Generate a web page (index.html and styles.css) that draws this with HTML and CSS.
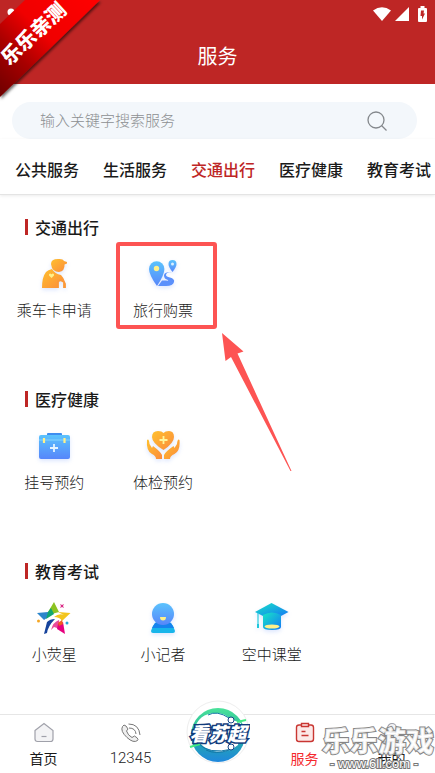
FILE: index.html
```html
<!DOCTYPE html>
<html lang="zh-CN">
<head>
  <meta charset="UTF-8">
  <meta name="viewport" content="width=device-width, initial-scale=1">
  <title>服务</title>
  <link rel="stylesheet" href="styles.css">
</head>
<body>

<div class="page">

  <header class="header">
    <div class="status">
      <svg width="18" height="14" viewBox="0 0 18 14"><path d="M0 3.5Q9-3 18 3.5L9 14Z" fill="#fff"/></svg>
      <svg width="14" height="14" viewBox="0 0 14 14"><path d="M14 0V14H0Z" fill="#fff"/></svg>
      <svg class="battery" width="9" height="16" viewBox="0 0 9 16"><path d="M2.5 0H6.5V2H8Q9 2 9 3V15Q9 16 8 16H1Q0 16 0 15V3Q0 2 1 2H2.5Z" fill="#fff"/><path d="M3 4.500H6L5.500 7.500H7L4 13.500V10H2.500Z" fill="#be2625"/></svg>
    </div>
    <h1>服务</h1>
  </header>

  <!-- corner ribbon -->
  <svg class="ribbon" width="104" height="104" viewBox="0 0 104 104">
    <defs>
      <linearGradient id="rib" x1="0" y1="1" x2="1" y2="0">
        <stop offset="0" stop-color="#6d0000"/>
        <stop offset=".3" stop-color="#a80000"/>
        <stop offset=".55" stop-color="#f00505"/>
        <stop offset="1" stop-color="#f00"/>
      </linearGradient>
      <filter id="ribShadow" x="-10%" y="-10%" width="130%" height="130%"><feDropShadow dx="1" dy="2" stdDeviation="1.500" flood-opacity=".6"/></filter>
    </defs>
    <circle cx="11" cy="12" r="3.500" fill="#fff"/>
    <path d="M25 0H100L0 97V24Z" fill="url(#rib)" filter="url(#ribShadow)"/>
    <text class="ribbon-text" x="33" y="41" text-anchor="middle" transform="rotate(-43 33 33)">乐乐亲测</text>
  </svg>

  <form class="search">
    <input type="search" placeholder="输入关键字搜索服务" aria-label="搜索服务">
    <button type="button" aria-label="搜索">
      <svg width="20" height="20" viewBox="0 0 20 20" fill="none" stroke="#84888c" stroke-width="1.300"><circle cx="9" cy="9" r="8"/><path d="M14.500 14.500L19.500 19.500"/></svg>
    </button>
  </form>

  <nav class="tabs">
    <a href="#">公共服务</a>
    <a href="#">生活服务</a>
    <a href="#traffic" class="active">交通出行</a>
    <a href="#health">医疗健康</a>
    <a href="#edu">教育考试</a>
  </nav>

  <main class="content">
    <section id="traffic">
      <h2>交通出行</h2>
      <div class="grid">
        <a href="#" class="item">
          <svg class="icon" viewBox="0 0 40 40">
            <defs><linearGradient id="orange" x1="0" y1="0" x2="1" y2="1"><stop offset="0" stop-color="#ffc02e"/><stop offset="1" stop-color="#fb8b3c"/></linearGradient></defs>
            <g fill="url(#orange)">
              <path d="M17 10Q17 5 24 5Q29 4.500 30 7L33 8V9.500L30.500 10.500Q31 17 25 18Q18 18 17 10Z"/>
              <path d="M18 15Q21 20 27 21Q30 24 31 28Q28 25 24 27V34H8Q8 23 12 18Q14 16 18 15Z"/>
            </g>
            <path d="M24 34V28Q26 24.500 30 28V34M30 28L31 30V34" fill="none" stroke="#fb9838" stroke-width="1.800"/>
            <path d="M17.500 24L15 21.500Q14.500 19.500 16.200 19.500L17.500 20.200L18.800 19.500Q20.500 19.500 20 21.500Z" fill="#fff08a"/>
          </svg>
          <span>乘车卡申请</span>
        </a>
        <a href="#" class="item marked">
          <svg class="icon" viewBox="0 0 40 40">
            <defs><linearGradient id="blue" x1="0" y1="0" x2="0" y2="1"><stop offset="0" stop-color="#5bc3fd"/><stop offset="1" stop-color="#5786fa"/></linearGradient></defs>
            <path d="M14 32Q6 21 6 15A7.700 7.700 0 0 1 21.400 15Q21.400 21 14 32Z" fill="url(#blue)"/>
            <circle cx="13.500" cy="14.500" r="2.700" fill="#fff08a"/>
            <path d="M29.500 18Q25.500 13 25.500 10A4 4 0 0 1 33.500 10Q33.500 13 29.500 18Z" fill="url(#blue)"/>
            <circle cx="29.500" cy="10" r="1.500" fill="#d9f0ff"/>
            <path d="M29 18Q23 18 23 21Q23 22.500 27 23.500Q32 25 31 28Q30 32 23 32H15L19 26.500H23Q26 27 25 26Q21 25 21 21.500Q21 17.500 29 18Z" fill="#5b90fb"/>
          </svg>
          <span>旅行购票</span>
          <svg class="mark" width="180" height="232" viewBox="0 0 180 232">
            <rect x="2" y="2" width="97" height="83" rx="1" fill="none" stroke="#fd5453" stroke-width="4"/>
            <path d="M106 91L127.500 109.500L121.500 111.500L175.500 229L174.500 229L115 115L109.500 119Z" fill="#fd5453"/>
          </svg>
        </a>
      </div>
    </section>

    <section id="health">
      <h2>医疗健康</h2>
      <div class="grid">
        <a href="#" class="item">
          <svg class="icon" viewBox="0 0 40 40">
            <rect x="13" y="7" width="15" height="5" rx="1" fill="#3e8df0"/>
            <rect x="5" y="9" width="31" height="24" rx="2" fill="url(#blue)"/>
            <path d="M5 14H36" stroke="#86d5ff" stroke-width="1"/>
            <path d="M10 12V17M30.500 12V17" stroke="#fff08a" stroke-width="2.200"/>
            <path d="M20 18V26M16 22H24" stroke="#e4f4ff" stroke-width="1.800"/>
          </svg>
          <span>挂号预约</span>
        </a>
        <a href="#" class="item">
          <svg class="icon" viewBox="0 0 40 40">
            <g fill="url(#orange)">
              <path d="M20.500 24Q9 17 9 11Q9 5 15 5Q19 5 20.500 7Q22 5 26 5Q31 5 31 11Q31 17 20.500 24Z"/>
              <path d="M4 14Q6 12 6.500 18L9 22L10 20Q18 26 19 29V33H13Q13 30 9 28Q3 25 4 14Z"/>
              <path d="M36.500 14Q34.500 12 34 18L31.500 22L30.500 20Q22 26 21 29V33H27Q27 30 31.500 28Q37.500 25 36.500 14Z"/>
            </g>
            <path d="M20.500 10V18M16.500 14H24.500" stroke="#fff59a" stroke-width="1.800"/>
          </svg>
          <span>体检预约</span>
        </a>
      </div>
    </section>

    <section id="edu">
      <h2>教育考试</h2>
      <div class="grid">
        <a href="#" class="item">
          <svg class="icon no-glow" viewBox="0 0 40 40">
            <path d="M20 4L25 14Q19 15 15 18L14 14Z" fill="#8cc321"/>
            <path d="M3 15L14 14L17 17L10 22Z" fill="#2c86cb"/>
            <path d="M14 14L17 10L20 16L12 21Z" fill="#11a66f"/>
            <path d="M24 14L36.500 15L28 23Q26 19 20 19Q25 15 30 17Z" fill="#f3c51c"/>
            <path d="M10 36L13 24Q16 21 21 21Q14 28 13 35Z" fill="#16439c"/>
            <path d="M17 32Q19 24 25 22L26 31L20 29Z" fill="#e94c9b"/>
            <path d="M24 26L29 24L31 36L23 31Z" fill="#e6007e"/>
            <path d="M24 25L28 22L29 26L25 28Z" fill="#f05c22"/>
            <path d="M26 6L28 7L30 6L29 8L30 10L28 9L26 10L27 8Z" fill="#d92985"/>
            <circle cx="4.500" cy="23" r="1.500" fill="#f5a623"/>
            <circle cx="33" cy="25" r="1.500" fill="#29a5d8"/>
          </svg>
          <span>小荧星</span>
        </a>
        <a href="#" class="item">
          <svg class="icon" viewBox="0 0 40 40">
            <defs><linearGradient id="cyan" x1="0" y1="0" x2="1" y2="1"><stop offset="0" stop-color="#17e5c6"/><stop offset="1" stop-color="#1479f5"/></linearGradient></defs>
            <path d="M13 24H27Q31 28 32 33Q32 35 30 35H10Q8 35 8 33Q9 28 13 24Z" fill="#18b5ea"/>
            <path d="M12 25H28L31 30H9Z" fill="#1683ee"/>
            <circle cx="20" cy="16" r="11" fill="url(#blue)"/>
            <path d="M17 19H23Q23 22.500 20 22.500Q17 22.500 17 19Z" fill="#fff08a"/>
          </svg>
          <span>小记者</span>
        </a>
        <a href="#" class="item">
          <svg class="icon" viewBox="0 0 40 40">
            <path d="M19.500 5L36.500 14L29 18H11L3 14Z" fill="url(#cyan)"/>
            <path d="M6 15V28" stroke="#29cde0" stroke-width="1.200"/><rect x="5" y="26" width="2" height="4" fill="#20c8dc"/>
            <path d="M11 17Q20 12 29 17V29Q29 32 20 32Q11 32 11 29Z" fill="url(#cyan)"/>
            <ellipse cx="20" cy="28.500" rx="7.500" ry="2" fill="#fff08a"/>
          </svg>
          <span>空中课堂</span>
        </a>
      </div>
    </section>
  </main>

  <nav class="tabbar">
    <a href="#">
      <svg width="22" height="22" viewBox="0 0 22 22" fill="#f3f3f5" stroke="#a0a1aa" stroke-width="1.200"><path d="M2 8.500L11 1.500L20 8.500V17Q20 19.500 17.500 19.500H4.500Q2 19.500 2 17Z"/><path d="M8.500 14.500H13.500"/></svg>
      <span>首页</span>
    </a>
    <a href="#">
      <svg width="22" height="22" viewBox="0 0 22 22" fill="none" stroke="#777" stroke-width="1"><path d="M4 3L2.500 4.500Q0 9 7 15.500Q13.500 21.500 17.500 18.500L18 17.500Q18 16 14.500 14L12 15.500Q8 13.500 6.500 9L8 7Q6 3 4 3Z" fill="#eee"/><path d="M8.500 2Q19 2 20 13M9 6Q15.500 6 16 12"/></svg>
      <span class="num">12345</span>
    </a>
    <a href="#" class="center" aria-label="看苏超">
      <svg class="logo" width="64" height="64" viewBox="0 0 64 64">
        <defs>
          <linearGradient id="ball" x1="0" y1="0" x2="0" y2="1"><stop offset="0" stop-color="#4be29a"/><stop offset=".45" stop-color="#25b69c"/><stop offset="1" stop-color="#1f87dd"/></linearGradient>
        </defs>
        <circle cx="32" cy="32" r="31" fill="#fff" stroke="#eee"/>
        <circle cx="32" cy="35" r="27" fill="url(#ball)"/>
        <path d="M8 31Q12 13 30 13Q39 13 44 19L55 23L52 45Q42 54 27 51Q12 47 8 31Z" fill="#fff"/>
        <path d="M22 15Q31 10 43 18M12 43Q22 55 47 49M20 50Q30 55 43 50" fill="none" stroke="#1478a6" stroke-width="1"/>
        <path d="M4 47L14 44M51 22L60 20" stroke="#43eb81" stroke-width="2"/>
        <circle cx="45" cy="20" r="3" fill="#fff" stroke="#164586"/><circle cx="45" cy="47" r="3" fill="#fff" stroke="#164586"/>
        <text class="logo-text" x="32" y="41" text-anchor="middle">看苏超</text>
      </svg>
    </a>
    <a href="#" class="active">
      <svg width="22" height="22" viewBox="0 0 22 22" fill="#fce9e8" stroke="#c93632" stroke-width="1.400"><rect x="2.500" y="3" width="17" height="16.500" rx="2.500"/><path d="M7.500 3V1.500H14.500V4.500H7.500Z"/><path d="M7.500 9.500H11.500M7.500 13.500H14.500"/></svg>
      <span>服务</span>
    </a>
    <a href="#">
      <svg width="22" height="22" viewBox="0 0 22 22" fill="#f3f3f5" stroke="#a0a1aa" stroke-width="1.200"><circle cx="11" cy="6" r="4.500"/><path d="M2.500 20Q2.500 12.500 11 12.500Q19.500 12.500 19.500 20Z"/></svg>
      <span>我的</span>
    </a>
    <svg class="watermark" width="116" height="54" viewBox="0 0 116 54">
      <text class="wm-name" x="59" y="33" text-anchor="middle">乐乐游戏</text>
      <text class="wm-url" x="55" y="49" text-anchor="middle">- www.6ll.com -</text>
    </svg>
  </nav>

</div>

</body>
</html>
```

FILE: styles.css
```css
* {
  box-sizing: border-box;
}

body {
  margin: 0;
  background: #fff;
  color: #1a1a1a;
  font-family: "Noto Sans CJK SC", sans-serif;
}

a {
  color: inherit;
  text-decoration: none;
}

.page {
  position: relative;
  display: flex;
  flex-direction: column;
  min-height: 100vh;
  overflow: hidden;
}

.header {
  height: 84px;
  background: #be2625;
  color: #fff;
}

.status {
  display: flex;
  justify-content: flex-end;
  align-items: center;
  gap: 4px;
  height: 28px;
  padding-right: 8px;
}

.battery {
  margin-left: 5px;
}

.header h1 {
  margin: 0;
  font-size: 20px;
  line-height: 56px;
  font-weight: 400;
  text-align: center;
}

.ribbon {
  position: absolute;
  top: 0;
  left: 0;
}

.ribbon-text {
  font-size: 20px;
  font-weight: 900;
  fill: #fff;
}

.search {
  display: flex;
  align-items: center;
  height: 37px;
  margin: 18px 18px 0 12px;
  padding: 0 30px 0 28px;
  border-radius: 19px;
  background: #f3f7fb;
}

.search input {
  flex: 1;
  height: 37px;
  min-width: 0;
  padding: 0 0 2px;
  border: none;
  outline: none;
  background: none;
  font-family: inherit;
  font-size: 15px;
  font-weight: 300;
}

.search input::placeholder {
  color: #8c8f92;
}

.search button {
  display: flex;
  padding: 0;
  border: none;
  background: none;
  cursor: pointer;
}

.tabs {
  display: flex;
  gap: 24px;
  height: 56px;
  padding: 0 15px;
  overflow: hidden;
  border-bottom: 1px solid #e4e4e4;
  box-shadow: 0 1px 3px rgba(0,0,0,0.08);
  font-size: 16px;
  font-weight: 500;
  line-height: 60px;
  white-space: nowrap;
}

.tabs .active {
  color: #be2625;
}

.content {
  flex: 1;
  display: flex;
  flex-direction: column;
  gap: 66px;
  padding: 20px 0;
}

h2 {
  display: flex;
  align-items: center;
  gap: 7px;
  margin: 0 0 15px;
  padding-left: 25px;
  font-size: 16px;
  line-height: 24px;
  font-weight: 500;
}

h2::before {
  content: "";
  width: 3px;
  height: 16px;
  background: #be2625;
}

.grid {
  display: grid;
  grid-template-columns: repeat(4, 1fr);
}

.item {
  display: flex;
  flex-direction: column;
  align-items: center;
  gap: 5px;
  font-size: 15px;
  line-height: 22px;
  font-weight: 300;
  white-space: nowrap;
}

.icon {
  width: 40px;
  height: 40px;
  filter: drop-shadow(0 2px 2px rgba(80,130,250,0.2));
}

.no-glow {
  filter: none;
}

/* red frame and arrow over the ticket entry */
.marked {
  position: relative;
}

.mark {
  position: absolute;
  top: -12px;
  left: 7px;
  z-index: 1;
  pointer-events: none;
}

.tabbar {
  position: relative;
  display: grid;
  grid-template-columns: repeat(5, 1fr);
  border-top: 1px solid #e6e6e6;
  background: #fff;
}

.tabbar a {
  display: flex;
  flex-direction: column;
  align-items: center;
  gap: 3px;
  padding: 7px 0 4px;
  font-size: 14px;
  line-height: 22px;
}

.tabbar .num {
  font-family: Roboto, sans-serif;
  font-size: 15px;
  font-weight: 300;
}

.tabbar .active {
  color: #f5282d;
}

.tabbar .center {
  position: relative;
}

.logo {
  position: absolute;
  top: -15px;
}

.logo-text {
  font-size: 19px;
  font-weight: 900;
  font-style: italic;
  fill: #fff;
  stroke: #123c7c;
  stroke-width: 3px;
  paint-order: stroke;
}

.watermark {
  position: absolute;
  right: 0;
  bottom: 0;
  pointer-events: none;
}

.wm-name {
  font-size: 28px;
  font-weight: 900;
  fill: #fff;
  fill-opacity: 0.85;
  stroke: #858585;
  stroke-width: 2px;
  paint-order: stroke;
}

.wm-url {
  font-family: "Liberation Sans", sans-serif;
  font-size: 13px;
  fill: #fff;
  stroke: #777;
  stroke-width: 2px;
  paint-order: stroke;
}
```
